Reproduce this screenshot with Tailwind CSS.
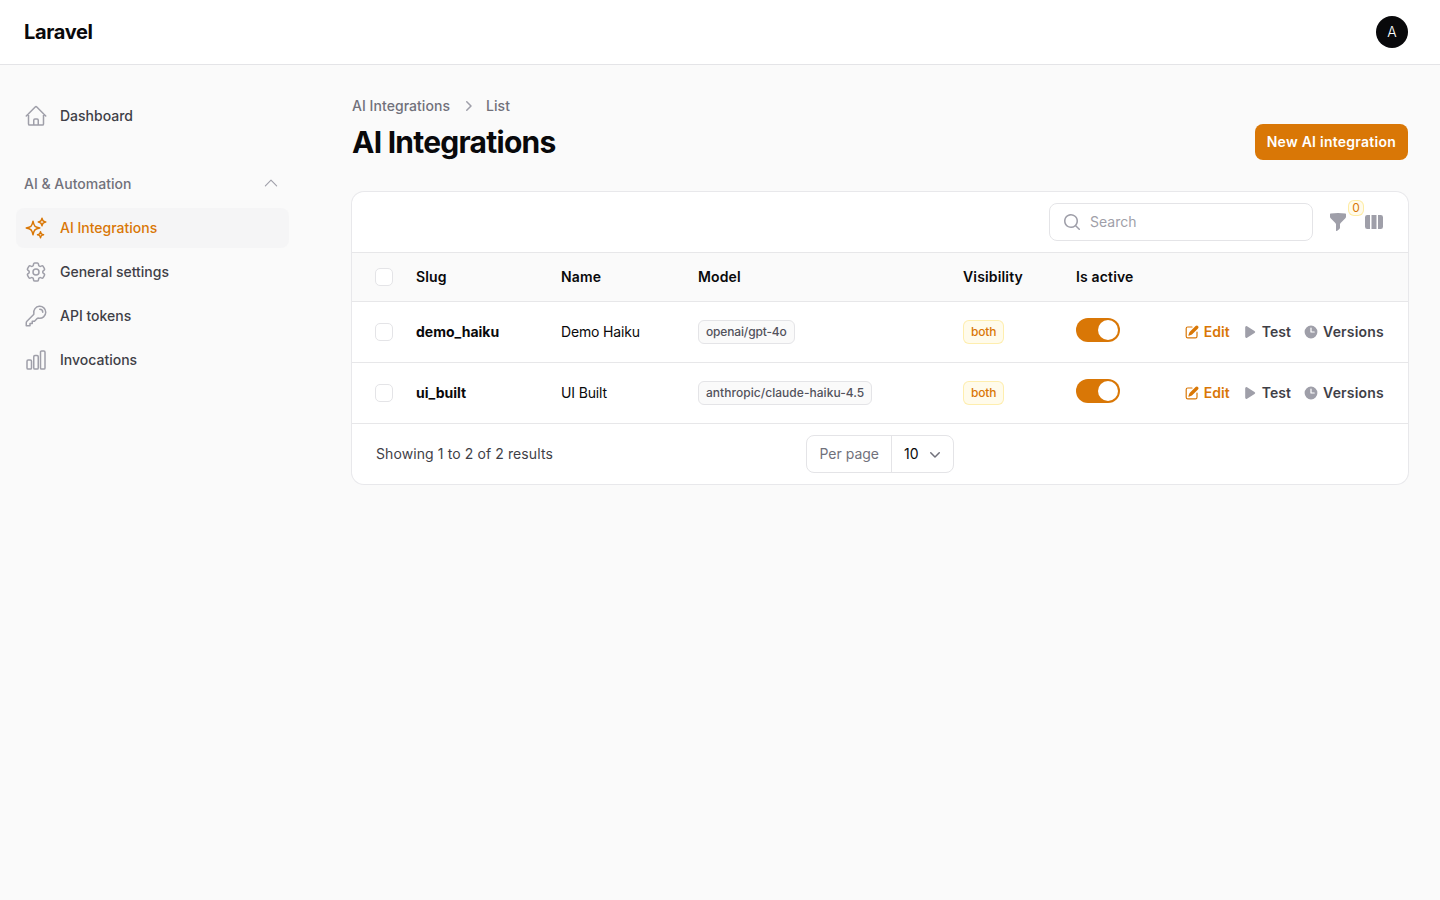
<!DOCTYPE html>
<html lang="en">
<head>
  <meta charset="UTF-8" />
  <title>AI Integrations</title>
  <script src="https://cdn.jsdelivr.net/npm/@tailwindcss/browser@4"></script>
</head>
<body class="bg-[#fafafa] text-zinc-950 min-h-screen font-['Inter',sans-serif] text-sm antialiased">

<header class="h-[65px] bg-white border-b border-zinc-200 flex items-center justify-between px-6 pr-8">
  <div class="text-xl font-bold tracking-[-0.35px] leading-5">Laravel</div>
  <div class="w-8 h-8 rounded-full bg-zinc-950 text-white flex items-center justify-center text-sm font-light">A</div>
</header>

<div class="flex">
  <!-- sidebar -->
  <aside class="w-[305px] shrink-0 pl-4 pr-4 pt-[31px] font-medium text-zinc-700">
    <a class="h-10 flex items-center gap-3 px-2 rounded-lg">
      <svg class="w-6 h-6 text-zinc-400" fill="none" viewBox="0 0 24 24" stroke="currentColor" stroke-width="1.5"><path stroke-linecap="round" stroke-linejoin="round" d="m2.25 12 8.954-8.955c.44-.439 1.152-.439 1.591 0L21.75 12M4.5 9.75v10.125c0 .621.504 1.125 1.125 1.125H9.75v-4.875c0-.621.504-1.125 1.125-1.125h2.25c.621 0 1.125.504 1.125 1.125V21h4.125c.621 0 1.125-.504 1.125-1.125V9.75M8.25 21h8.25"/></svg>
      Dashboard
    </a>
    <div class="mt-7 h-10 flex items-center justify-between pl-2 pr-2 text-zinc-500">
      <span>AI &amp; Automation</span>
      <svg class="w-[18px] h-[18px] mr-px -mt-0.5 text-zinc-400" fill="none" viewBox="0 0 24 24" stroke="currentColor" stroke-width="1.5"><path stroke-linecap="round" stroke-linejoin="round" d="m4.5 15.75 7.5-7.5 7.5 7.5"/></svg>
    </div>
    <nav class="mt-1 flex flex-col gap-1">
      <a class="h-10 flex items-center gap-3 px-2 rounded-lg bg-zinc-100/80 text-[#d97706]">
        <svg class="w-6 h-6 text-[#d97706]" fill="none" viewBox="0 0 24 24" stroke="currentColor" stroke-width="1.5"><path stroke-linecap="round" stroke-linejoin="round" d="M9.813 15.904 9 18.75l-.813-2.846a4.5 4.5 0 0 0-3.09-3.09L2.25 12l2.846-.813a4.5 4.5 0 0 0 3.09-3.09L9 5.25l.813 2.846a4.5 4.5 0 0 0 3.09 3.09L15.75 12l-2.846.813a4.5 4.5 0 0 0-3.09 3.09ZM18.259 8.715 18 9.75l-.259-1.035a3.375 3.375 0 0 0-2.455-2.456L14.25 6l1.036-.259a3.375 3.375 0 0 0 2.455-2.456L18 2.25l.259 1.035a3.375 3.375 0 0 0 2.456 2.456L21.75 6l-1.035.259a3.375 3.375 0 0 0-2.456 2.456ZM16.894 20.567 16.5 21.75l-.394-1.183a2.25 2.25 0 0 0-1.423-1.423L13.5 18.75l1.183-.394a2.25 2.25 0 0 0 1.423-1.423l.394-1.183.394 1.183a2.25 2.25 0 0 0 1.423 1.423l1.183.394-1.183.394a2.25 2.25 0 0 0-1.423 1.423Z"/></svg>
        AI Integrations
      </a>
      <a class="h-10 flex items-center gap-3 px-2 rounded-lg">
        <svg class="w-6 h-6 text-zinc-400" fill="none" viewBox="0 0 24 24" stroke="currentColor" stroke-width="1.5"><path stroke-linecap="round" stroke-linejoin="round" d="M9.594 3.94c.09-.542.56-.94 1.11-.94h2.593c.55 0 1.02.398 1.11.94l.213 1.281c.063.374.313.686.645.87.074.04.147.083.22.127.325.196.72.257 1.075.124l1.217-.456a1.125 1.125 0 0 1 1.37.49l1.296 2.247a1.125 1.125 0 0 1-.26 1.431l-1.003.827c-.293.241-.438.613-.43.992a7.723 7.723 0 0 1 0 .255c-.008.378.137.75.43.991l1.004.827c.424.35.534.955.26 1.43l-1.298 2.247a1.125 1.125 0 0 1-1.369.491l-1.217-.456c-.355-.133-.75-.072-1.076.124a6.47 6.47 0 0 1-.22.128c-.331.183-.581.495-.644.869l-.213 1.281c-.09.543-.56.94-1.11.94h-2.594c-.55 0-1.019-.398-1.11-.94l-.213-1.281c-.062-.374-.312-.686-.644-.87a6.52 6.52 0 0 1-.22-.127c-.325-.196-.72-.257-1.076-.124l-1.217.456a1.125 1.125 0 0 1-1.369-.49l-1.297-2.247a1.125 1.125 0 0 1 .26-1.431l1.004-.827c.292-.24.437-.613.43-.991a6.932 6.932 0 0 1 0-.255c.007-.38-.138-.751-.43-.992l-1.004-.827a1.125 1.125 0 0 1-.26-1.43l1.297-2.247a1.125 1.125 0 0 1 1.37-.491l1.216.456c.356.133.751.072 1.076-.124.072-.044.146-.086.22-.128.332-.183.582-.495.644-.869l.214-1.28Z"/><path stroke-linecap="round" stroke-linejoin="round" d="M15 12a3 3 0 1 1-6 0 3 3 0 0 1 6 0Z"/></svg>
        General settings
      </a>
      <a class="h-10 flex items-center gap-3 px-2 rounded-lg">
        <svg class="w-6 h-6 text-zinc-400" fill="none" viewBox="0 0 24 24" stroke="currentColor" stroke-width="1.5"><path stroke-linecap="round" stroke-linejoin="round" d="M15.75 5.25a3 3 0 0 1 3 3m3 0a6 6 0 0 1-7.029 5.912c-.563-.097-1.159.026-1.563.43L10.5 17.25H8.25v2.25H6v2.25H2.25v-2.818c0-.597.237-1.17.659-1.591l6.499-6.499c.404-.404.527-1 .43-1.563A6 6 0 1 1 21.75 8.25Z"/></svg>
        API tokens
      </a>
      <a class="h-10 flex items-center gap-3 px-2 rounded-lg">
        <svg class="w-6 h-6 text-zinc-400" fill="none" viewBox="0 0 24 24" stroke="currentColor" stroke-width="1.5"><path stroke-linecap="round" stroke-linejoin="round" d="M3 13.125C3 12.504 3.504 12 4.125 12h2.25c.621 0 1.125.504 1.125 1.125v6.75C7.5 20.496 6.996 21 6.375 21h-2.25A1.125 1.125 0 0 1 3 19.875v-6.75ZM9.75 8.625c0-.621.504-1.125 1.125-1.125h2.25c.621 0 1.125.504 1.125 1.125v11.25c0 .621-.504 1.125-1.125 1.125h-2.25a1.125 1.125 0 0 1-1.125-1.125V8.625ZM16.5 4.125c0-.621.504-1.125 1.125-1.125h2.25C20.496 3 21 3.504 21 4.125v15.75c0 .621-.504 1.125-1.125 1.125h-2.25a1.125 1.125 0 0 1-1.125-1.125V4.125Z"/></svg>
        Invocations
      </a>
    </nav>
  </aside>

  <!-- main -->
  <main class="flex-1 pl-[47px] pr-8 pt-[31px]">
    <div class="flex items-center gap-2 h-5 font-medium text-zinc-500 tracking-[0.05px]">
      <span>AI Integrations</span>
      <svg class="w-5 h-5 text-zinc-400" viewBox="0 0 20 20" fill="currentColor"><path fill-rule="evenodd" clip-rule="evenodd" d="M8.22 5.22a.75.75 0 0 1 1.06 0l4.25 4.25a.75.75 0 0 1 0 1.06l-4.25 4.25a.75.75 0 0 1-1.06-1.06L11.94 10 8.22 6.28a.75.75 0 0 1 0-1.06Z"/></svg>
      <span>List</span>
    </div>
    <div class="mt-2 flex items-center justify-between h-9">
      <h1 class="text-3xl font-bold tracking-tight">AI Integrations</h1>
      <button class="h-9 px-3 rounded-lg bg-[#d97706] text-white font-semibold tracking-[0.25px]">New AI integration</button>
    </div>

    <div class="mt-8 bg-white ring-1 ring-zinc-200/80 rounded-xl overflow-hidden">
      <div class="h-[60px] flex items-center justify-end pr-6 gap-4">
        <div class="w-[264px] h-[38px] border border-zinc-200 rounded-lg flex items-center gap-2 px-3 text-zinc-400">
          <svg class="w-5 h-5" viewBox="0 0 20 20" fill="currentColor"><path fill-rule="evenodd" clip-rule="evenodd" d="M9 3.5a5.5 5.5 0 1 0 0 11 5.5 5.5 0 0 0 0-11ZM2 9a7 7 0 1 1 12.452 4.391l3.328 3.329a.75.75 0 1 1-1.06 1.06l-3.329-3.328A7 7 0 0 1 2 9Z"/></svg>
          <span>Search</span>
        </div>
        <div class="relative w-5 h-5 ml-[-1px]">
          <svg class="w-5 h-5 text-zinc-400" viewBox="0 0 20 20" fill="currentColor"><path fill-rule="evenodd" clip-rule="evenodd" d="M2.628 1.601C5.028 1.206 7.49 1 10 1s4.973.206 7.372.601a.75.75 0 0 1 .628.74v2.288a2.25 2.25 0 0 1-.659 1.59l-4.682 4.683a2.25 2.25 0 0 0-.659 1.59v3.037c0 .684-.31 1.33-.844 1.757l-1.937 1.55A.75.75 0 0 1 8 18.25v-5.757a2.25 2.25 0 0 0-.659-1.591L2.659 6.22A2.25 2.25 0 0 1 2 4.629V2.34a.75.75 0 0 1 .628-.74Z"/></svg>
          <span class="absolute left-5 top-[-12px] w-4 h-4 rounded-md bg-amber-50 border border-amber-200/70 text-[#d97706] text-xs leading-none flex items-center justify-center">0</span>
        </div>
        <svg class="w-5 h-5 text-zinc-400" viewBox="0 0 20 20" fill="currentColor"><path d="M14 17h2.75A2.25 2.25 0 0 0 19 14.75v-9.5A2.25 2.25 0 0 0 16.75 3H14v14ZM12.5 3h-5v14h5V3ZM3.25 3H6v14H3.25A2.25 2.25 0 0 1 1 14.75v-9.5A2.25 2.25 0 0 1 3.25 3Z"/></svg>
      </div>

      <table class="w-full table-fixed text-left">
        <colgroup>
          <col class="w-[52px]" /><col class="w-[145px]" /><col class="w-[137px]" /><col class="w-[265px]" /><col class="w-[113px]" /><col class="w-[109px]" /><col />
        </colgroup>
        <thead class="bg-zinc-50">
          <tr class="h-[49px] border-y border-zinc-200/90">
            <th class="pl-[23px]"><span class="block w-[18px] h-[18px] rounded-[5px] bg-white border border-zinc-200"></span></th>
            <th class="px-3 font-semibold tracking-[0.15px]">Slug</th>
            <th class="px-3 font-semibold tracking-[0.15px]">Name</th>
            <th class="px-3 font-semibold tracking-[0.15px]">Model</th>
            <th class="px-3 font-semibold tracking-[0.15px]">Visibility</th>
            <th class="px-3 font-semibold tracking-[0.15px]">Is active</th>
            <th></th>
          </tr>
        </thead>
        <tbody>
          <tr class="h-[61px] border-b border-zinc-200/90">
            <td class="pl-[23px]"><span class="block w-[18px] h-[18px] rounded-[5px] bg-white border border-zinc-200"></span></td>
            <td class="px-3 font-bold">demo_haiku</td>
            <td class="px-3 tracking-[-0.15px]">Demo Haiku</td>
            <td class="px-3"><span class="inline-flex items-center h-6 px-[7px] rounded-md bg-zinc-50 border border-zinc-200 text-xs font-medium text-zinc-600 tracking-[-0.15px]">openai/gpt-4o</span></td>
            <td class="px-3"><span class="inline-flex items-center h-6 px-[7px] rounded-md bg-amber-50 border border-amber-200/60 text-xs font-medium text-[#d97706] tracking-[-0.2px]">both</span></td>
            <td class="px-3 pb-1">
              <span class="flex items-center justify-end w-11 h-6 rounded-full bg-[#d97706] pr-0.5"><span class="block w-5 h-5 rounded-full bg-white"></span></span>
            </td>
            <td class="pr-6">
              <div class="flex items-center justify-end gap-3 font-semibold text-zinc-700">
                <a class="flex items-center gap-1 text-[#d97706] tracking-[0.05px]"><svg class="w-4 h-4 text-[#d97706]" viewBox="0 0 20 20" fill="currentColor"><path d="m5.433 13.917 1.262-3.155A4 4 0 0 1 7.58 9.42l6.92-6.918a2.121 2.121 0 0 1 3 3l-6.92 6.918c-.383.383-.84.685-1.343.886l-3.154 1.262a.5.5 0 0 1-.65-.65Z"/><path d="M3.5 5.75c0-.69.56-1.25 1.25-1.25H10A.75.75 0 0 0 10 3H4.75A2.75 2.75 0 0 0 2 5.75v9.5A2.75 2.75 0 0 0 4.75 18h9.5A2.75 2.75 0 0 0 17 15.25V10a.75.75 0 0 0-1.5 0v5.25c0 .69-.56 1.25-1.25 1.25h-9.5c-.69 0-1.25-.56-1.25-1.25v-9.5Z"/></svg>Edit</a>
                <a class="flex items-center gap-1 tracking-[0.05px]"><svg class="w-4 h-4 text-zinc-400" viewBox="0 0 20 20" fill="currentColor"><path d="M6.3 2.84A1.5 1.5 0 0 0 4 4.11v11.78a1.5 1.5 0 0 0 2.3 1.27l9.344-5.891a1.5 1.5 0 0 0 0-2.538L6.3 2.841Z"/></svg>Test</a>
                <a class="flex items-center gap-1 tracking-[0.2px]"><svg class="w-4 h-4 text-zinc-400" viewBox="0 0 20 20" fill="currentColor"><path fill-rule="evenodd" clip-rule="evenodd" d="M10 18a8 8 0 1 0 0-16 8 8 0 0 0 0 16Zm.75-13a.75.75 0 0 0-1.5 0v5c0 .414.336.75.75.75h4a.75.75 0 0 0 0-1.5h-3.25V5Z"/></svg>Versions</a>
              </div>
            </td>
          </tr>
          <tr class="h-[61px] border-b border-zinc-200/90">
            <td class="pl-[23px]"><span class="block w-[18px] h-[18px] rounded-[5px] bg-white border border-zinc-200"></span></td>
            <td class="px-3 font-bold">ui_built</td>
            <td class="px-3 tracking-[-0.15px]">UI Built</td>
            <td class="px-3"><span class="inline-flex items-center h-6 px-[7px] rounded-md bg-zinc-50 border border-zinc-200 text-xs font-medium text-zinc-600 tracking-[0.04px]">anthropic/claude-haiku-4.5</span></td>
            <td class="px-3"><span class="inline-flex items-center h-6 px-[7px] rounded-md bg-amber-50 border border-amber-200/60 text-xs font-medium text-[#d97706] tracking-[-0.2px]">both</span></td>
            <td class="px-3 pb-1">
              <span class="flex items-center justify-end w-11 h-6 rounded-full bg-[#d97706] pr-0.5"><span class="block w-5 h-5 rounded-full bg-white"></span></span>
            </td>
            <td class="pr-6">
              <div class="flex items-center justify-end gap-3 font-semibold text-zinc-700">
                <a class="flex items-center gap-1 text-[#d97706] tracking-[0.05px]"><svg class="w-4 h-4 text-[#d97706]" viewBox="0 0 20 20" fill="currentColor"><path d="m5.433 13.917 1.262-3.155A4 4 0 0 1 7.58 9.42l6.92-6.918a2.121 2.121 0 0 1 3 3l-6.92 6.918c-.383.383-.84.685-1.343.886l-3.154 1.262a.5.5 0 0 1-.65-.65Z"/><path d="M3.5 5.75c0-.69.56-1.25 1.25-1.25H10A.75.75 0 0 0 10 3H4.75A2.75 2.75 0 0 0 2 5.75v9.5A2.75 2.75 0 0 0 4.75 18h9.5A2.75 2.75 0 0 0 17 15.25V10a.75.75 0 0 0-1.5 0v5.25c0 .69-.56 1.25-1.25 1.25h-9.5c-.69 0-1.25-.56-1.25-1.25v-9.5Z"/></svg>Edit</a>
                <a class="flex items-center gap-1 tracking-[0.05px]"><svg class="w-4 h-4 text-zinc-400" viewBox="0 0 20 20" fill="currentColor"><path d="M6.3 2.84A1.5 1.5 0 0 0 4 4.11v11.78a1.5 1.5 0 0 0 2.3 1.27l9.344-5.891a1.5 1.5 0 0 0 0-2.538L6.3 2.841Z"/></svg>Test</a>
                <a class="flex items-center gap-1 tracking-[0.2px]"><svg class="w-4 h-4 text-zinc-400" viewBox="0 0 20 20" fill="currentColor"><path fill-rule="evenodd" clip-rule="evenodd" d="M10 18a8 8 0 1 0 0-16 8 8 0 0 0 0 16Zm.75-13a.75.75 0 0 0-1.5 0v5c0 .414.336.75.75.75h4a.75.75 0 0 0 0-1.5h-3.25V5Z"/></svg>Versions</a>
              </div>
            </td>
          </tr>
        </tbody>
      </table>

      <div class="h-[60px] grid grid-cols-3 items-center px-6">
        <div class="text-zinc-700 tracking-[0.1px] whitespace-nowrap">Showing 1 to 2 of 2 results</div>
        <div class="flex justify-center">
          <div class="flex h-[38px] items-center border border-zinc-200 rounded-lg">
            <span class="px-3 text-zinc-500 border-r border-zinc-200 h-full flex items-center">Per page</span>
            <span class="pl-3 pr-2 flex items-center gap-1.5">10
              <svg class="w-5 h-5 text-zinc-500" viewBox="0 0 20 20" fill="currentColor"><path fill-rule="evenodd" clip-rule="evenodd" d="M5.22 8.22a.75.75 0 0 1 1.06 0L10 11.94l3.72-3.72a.75.75 0 1 1 1.06 1.06l-4.25 4.25a.75.75 0 0 1-1.06 0L5.22 9.28a.75.75 0 0 1 0-1.06Z"/></svg>
            </span>
          </div>
        </div>
        <div></div>
      </div>
    </div>
  </main>
</div>

</body>
</html>
